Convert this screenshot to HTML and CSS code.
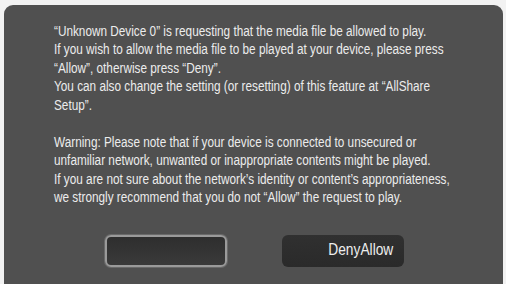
FILE: index.html
```html
<!DOCTYPE html>
<html>
<head>
<meta charset="utf-8">
<link rel="stylesheet" href="styles.css">
</head>
<body>
<div class="panel">
  <div class="msg">
    <p>“Unknown Device 0” is requesting that the media file be allowed to play.<br>If you wish to allow the media file to be played at your device, please press<br>“Allow”, otherwise press “Deny”.<br>You can also change the setting (or resetting) of this feature at “AllShare<br>Setup”.</p>
    <p>Warning: Please note that if your device is connected to unsecured or<br>unfamiliar network, unwanted or inappropriate contents might be played.<br>If you are not sure about the network’s identity or content’s appropriateness,<br>we strongly recommend that you do not “Allow” the request to play.</p>
  </div>
  <div class="buttons">
    <div class="btn btn-focus"></div>
    <div class="btn btn-plain"><span class="label">DenyAllow</span></div>
  </div>
</div>
</body>
</html>
```
FILE: styles.css
```css
html, body {
  margin: 0;
  padding: 0;
  background: #f2f2f2;
  width: 506px;
  height: 284px;
  overflow: hidden;
}
.panel {
  margin: 5px 3px 0 4px;
  height: 290px;
  background: #505050;
  border-radius: 9px 9px 0 0;
  box-sizing: border-box;
  padding: 17px 0 0 50px;
  font-family: "Liberation Sans", Arial, sans-serif;
  color: #ececec;
  font-size: 15.5px;
  line-height: 18.4px;
}
.msg {
  transform: scaleX(0.76);
  transform-origin: 0 0;
}
.msg p {
  margin: 0 0 19px 0;
  white-space: nowrap;
}
.buttons {
  display: flex;
  gap: 55px;
  margin: 0 0 0 51px;
  padding-top: 9px;
}
.btn {
  width: 122px;
  height: 32px;
  box-sizing: border-box;
  border-radius: 6px;
}
.btn-focus {
  border: 2px solid #9a9a9a;
  background: linear-gradient(#2e2e2e, #3a3a3a);
  box-shadow: 0 0 0 1px #6a6a6a;
}
.btn-plain {
  background: linear-gradient(#303030, #2a2a2a);
  display: flex;
  align-items: center;
  justify-content: flex-end;
  padding-right: 11px;
  font-size: 17px;
  color: #ededed;
}
.label {
  display: inline-block;
  transform: scaleX(0.81);
  transform-origin: 100% 50%;
}
```
